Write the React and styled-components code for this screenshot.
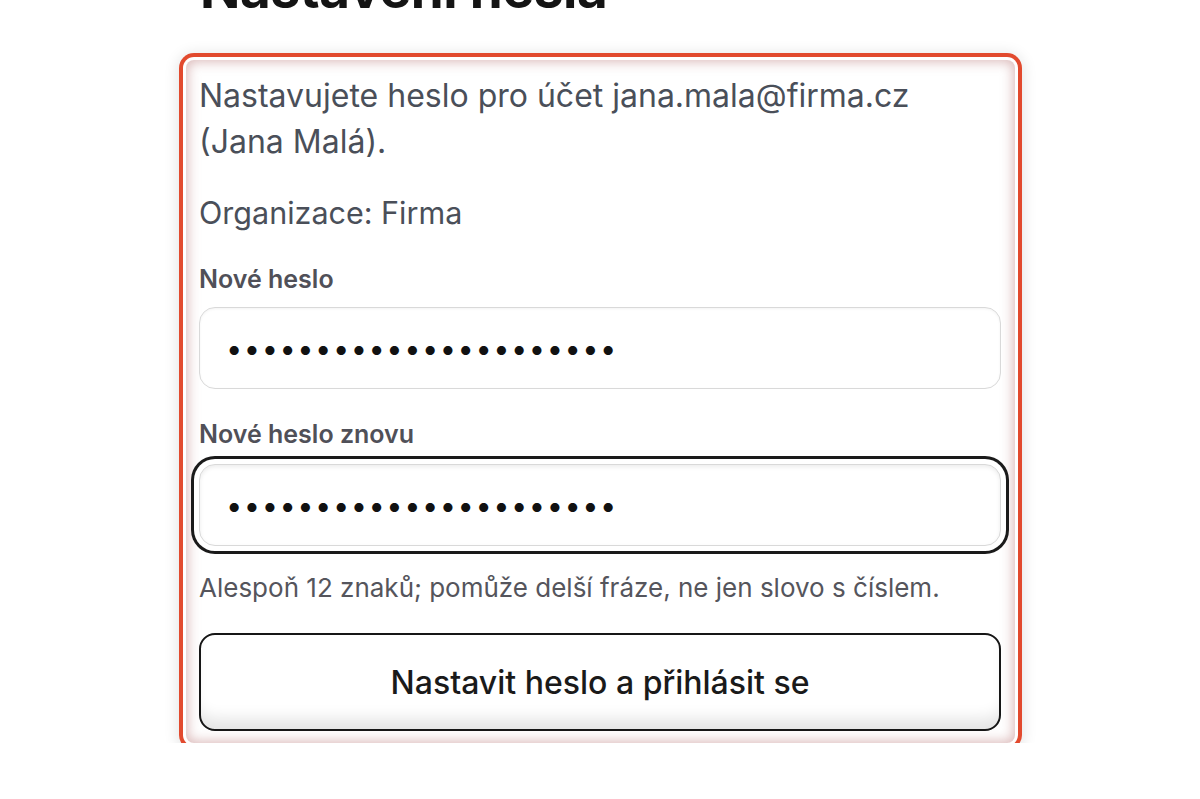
import React from "react";
import styled, { createGlobalStyle } from "styled-components";

const Global = createGlobalStyle`
  html, body { margin: 0; padding: 0; background: #ffffff; }
  body { font-family: Inter, "Noto Sans", "Liberation Sans", sans-serif; }
  * { box-sizing: border-box; }
`;

const Page = styled.main`
  width: 830px;
  margin: 0 auto;
  padding-left: 1px;
`;

const Title = styled.h1`
  margin: -40px 0 0 14px;
  font-size: 53px;
  line-height: 58px;
  font-weight: 700;
  color: #141414;
  letter-spacing: -0.3px;
  white-space: nowrap;
`;

const Card = styled.section`
  margin-top: 42px;
  border-radius: 8px;
  padding: 13px 14px 12px 13px;
  background: #ffffff;
  box-shadow:
    inset 0 0 12px 2px rgba(185, 120, 120, 0.5),
    0 0 0 3px #ffffff,
    0 0 0 7px #e24a2e,
    0 2px 14px 9px rgba(0, 0, 0, 0.1);
`;

const Lead = styled.p`
  margin: 0;
  font-size: 32px;
  line-height: 46px;
  color: #4a4f59;
`;

const Org = styled(Lead)`
  margin-top: 25px;
  font-size: 30.5px;
`;

const Field = styled.div`
  margin-top: ${(p) => p.$top}px;
  display: flex;
  flex-direction: column;
`;

const Label = styled.label`
  font-size: 25px;
  line-height: 32px;
  font-weight: 600;
  color: #505058;
`;

const Input = styled.input`
  margin-top: ${(p) => p.$gap}px;
  height: 82px;
  width: 100%;
  border: 1px solid #d9d9d9;
  border-radius: 16px;
  padding: 0 0 0 26px;
  font-family: Inter, "Noto Sans", sans-serif;
  font-size: 29px;
  letter-spacing: 1.5px;
  color: #111111;
  background: #ffffff;
  outline: none;
  box-shadow: ${(p) =>
    p.$focused
      ? "inset 0 2px 4px rgba(0,0,0,0.08), 0 0 0 5px #ffffff, 0 0 0 8px #1a1a1a"
      : "inset 0 1px 3px rgba(0,0,0,0.05)"};
`;

const Hint = styled.p`
  margin: 26px 0 0;
  font-size: 26px;
  line-height: 32px;
  color: #55555c;
`;

const Button = styled.button`
  margin-top: 29px;
  width: 100%;
  height: 98px;
  border: 2px solid #161616;
  border-radius: 16px;
  background: #ffffff;
  box-shadow: inset 0 -18px 16px -8px rgba(0, 0, 0, 0.11);
  font-family: Inter, "Noto Sans", sans-serif;
  font-size: 32px;
  font-weight: 500;
  color: #1a1a1a;
  cursor: pointer;
`;

export default function App() {
  return (
    <>
      <Global />
      <Page>
        <Title>Nastavení hesla</Title>
        <Card>
          <Lead>Nastavujete heslo pro účet jana.mala@firma.cz (Jana{"\u00a0"}Malá).</Lead>
          <Org>Organizace: Firma</Org>
          <Field $top={27}>
            <Label htmlFor="p1">Nové heslo</Label>
            <Input id="p1" $gap={12} type="password" readOnly value="abcdefghijklmnopqrstuv" />
          </Field>
          <Field $top={29}>
            <Label htmlFor="p2">Nové heslo znovu</Label>
            <Input id="p2" $gap={14} $focused type="password" readOnly value="abcdefghijklmnopqrstuv" />
          </Field>
          <Hint>Alespoň 12 znaků; pomůže delší fráze, ne jen slovo s číslem.</Hint>
          <Button type="button">Nastavit heslo a přihlásit se</Button>
        </Card>
      </Page>
    </>
  );
}
